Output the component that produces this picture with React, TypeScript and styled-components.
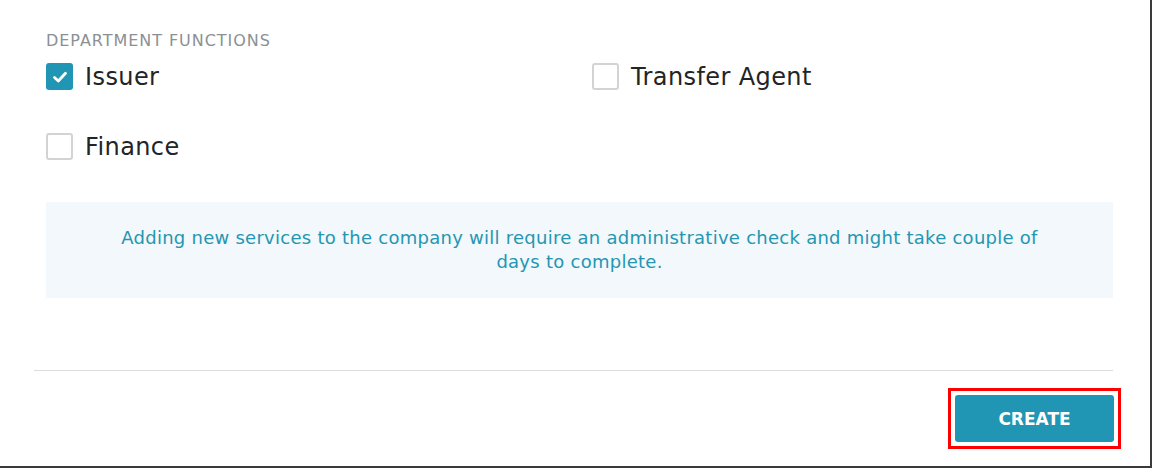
import React from 'react';
import styled, { createGlobalStyle } from 'styled-components';

const GlobalStyle = createGlobalStyle`
  html, body {
    margin: 0;
    padding: 0;
    background: #ffffff;
  }
  body {
    font-family: 'DejaVu Sans', 'Liberation Sans', sans-serif;
  }
`;

const Modal = styled.div`
  width: 1152px;
  height: 468px;
  box-sizing: border-box;
  background: #ffffff;
  border-right: 2px solid #3a3a3a;
  border-bottom: 2px solid #3a3a3a;
  display: flex;
  flex-direction: column;
`;

const ModalBody = styled.div`
  padding: 31px 37px 0 46px;
`;

const SectionLabel = styled.div`
  font-size: 16px;
  line-height: 20px;
  letter-spacing: 0.95px;
  color: #8b9095;
  text-transform: uppercase;
  margin-bottom: 12px;
`;

const FunctionGrid = styled.div`
  display: grid;
  grid-template-columns: 546px 1fr;
  grid-auto-rows: 27px;
  row-gap: 43px;
`;

const CheckRow = styled.label`
  display: flex;
  align-items: center;
  gap: 12px;
  font-size: 24px;
  line-height: 28px;
  letter-spacing: 0.4px;
  color: #222426;
  cursor: pointer;
`;

const Box = styled.span<{ $checked?: boolean }>`
  width: 27px;
  height: 27px;
  box-sizing: border-box;
  border-radius: 3px;
  border: ${(p) => (p.$checked ? 'none' : '2px solid #d3d3d3')};
  background: ${(p) => (p.$checked ? '#2196b4' : '#ffffff')};
  display: flex;
  align-items: center;
  justify-content: center;
  flex-shrink: 0;
`;

const InfoBox = styled.div`
  margin-top: 42px;
  background: #f2f8fb;
  padding: 24px 0 24px;
  display: flex;
  justify-content: center;
`;

const InfoText = styled.p`
  margin: 0;
  width: 940px;
  text-align: center;
  font-size: 18px;
  line-height: 24px;
  letter-spacing: 0.26px;
  color: #2596b2;
`;

const Divider = styled.hr`
  margin: 72px 37px 0 34px;
  border: none;
  border-top: 1px solid #dcdcdc;
`;

const Footer = styled.div`
  display: flex;
  justify-content: flex-end;
  padding: 17px 29px 0 0;
`;

const Highlight = styled.div`
  border: 3px solid #ff0000;
  padding: 4px;
  display: flex;
`;

const CreateButton = styled.button`
  width: 159px;
  height: 47px;
  border: none;
  border-radius: 3px;
  background: #2196b4;
  color: #ffffff;
  font-family: 'DejaVu Sans', 'Liberation Sans', sans-serif;
  font-weight: bold;
  font-size: 17px;
  cursor: pointer;
`;

const Check = () => (
  <svg width="18" height="18" viewBox="0 0 18 18">
    <path d="M3.5 9.5 L7.3 13 L14.5 5.2" fill="none" stroke="#ffffff" strokeWidth="2.8" strokeLinecap="round" strokeLinejoin="round" />
  </svg>
);

const CheckItem = ({ label, checked }: { label: string; checked?: boolean }) => (
  <CheckRow>
    <Box $checked={checked}>{checked && <Check />}</Box>
    {label}
  </CheckRow>
);

const App = () => {
  return (
    <>
      <GlobalStyle />
      <Modal>
        <ModalBody>
          <SectionLabel>Department Functions</SectionLabel>
          <FunctionGrid>
            <CheckItem label='Issuer' checked />
            <CheckItem label='Transfer Agent' />
            <CheckItem label='Finance' />
          </FunctionGrid>
          <InfoBox>
            <InfoText>
              Adding new services to the company will require an administrative check and might take couple of days to complete.
            </InfoText>
          </InfoBox>
        </ModalBody>
        <Divider />
        <Footer>
          <Highlight>
            <CreateButton>CREATE</CreateButton>
          </Highlight>
        </Footer>
      </Modal>
    </>
  );
};

export default App;
